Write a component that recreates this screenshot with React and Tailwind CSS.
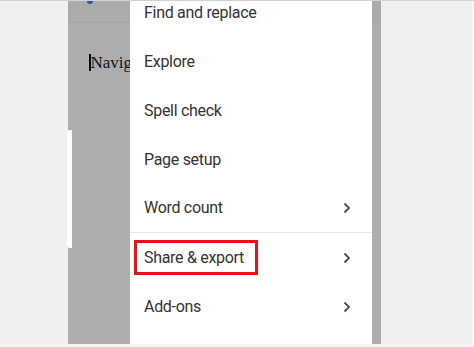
import React from "react";

const Chevron = () => (
  <svg width="8" height="12" viewBox="0 0 8 12" className="text-[#4a4a4a]">
    <path d="M1.5 1.5 L6 6 L1.5 10.5" fill="none" stroke="currentColor" strokeWidth="1.8" />
  </svg>
);

function Item({ label, chevron, boxed, divider }) {
  return (
    <div className={`relative flex h-[49px] items-center pl-[14px] pr-[21px] ${divider ? "border-b border-[#e6e6e6]" : ""}`}>
      <span className="flex-1 text-[16px] tracking-[-0.3px] text-[#333333]">{label}</span>
      {chevron && <Chevron />}
      {boxed && (
        <div className="absolute left-[4px] top-[7px] h-[35px] w-[124px] border-[3px] border-[#e3141b]" />
      )}
    </div>
  );
}

export default function App() {
  return (
    <div className="relative h-[347px] w-[474px] overflow-hidden bg-[#f5f5f5]" style={{ fontFamily: "Roboto, 'Liberation Sans', sans-serif" }}>
      <div className="flex h-[344px] w-full border-t border-[#d2d2d2]">
        <div className="w-[68px] bg-[#f0f0f0]" />
        <div className="relative w-[313px] overflow-hidden bg-[#adadad]">
          <div className="h-[22px] border-b border-[#a4a4a4] bg-[#ababab]" />
          <div className="absolute left-[19px] top-[-3px] h-[6px] w-[6px] rounded-full bg-[#3a4fa8]" />
          <div className="flex items-center pl-[21px] pt-[27px]">
            <span className="h-[17px] w-[1.5px] bg-black" />
            <span className="text-[17px] text-[#111]" style={{ fontFamily: "'Liberation Serif', serif" }}>Navig</span>
          </div>
          <div className="absolute left-[62px] top-[-13px] flex h-[360px] w-[242px] flex-col bg-white">
            <Item label="Find and replace" />
            <Item label="Explore" />
            <Item label="Spell check" />
            <Item label="Page setup" />
            <Item label="Word count" chevron divider />
            <Item label="Share & export" chevron boxed />
            <Item label="Add-ons" chevron />
          </div>
        </div>
        <div className="flex-1 border-r-2 border-[#f8f8f8] bg-[#efefef]" />
      </div>
      <div className="absolute left-[67px] top-[130px] h-[118px] w-[5px] rounded-l-[3px] bg-white" />
    </div>
  );
}
